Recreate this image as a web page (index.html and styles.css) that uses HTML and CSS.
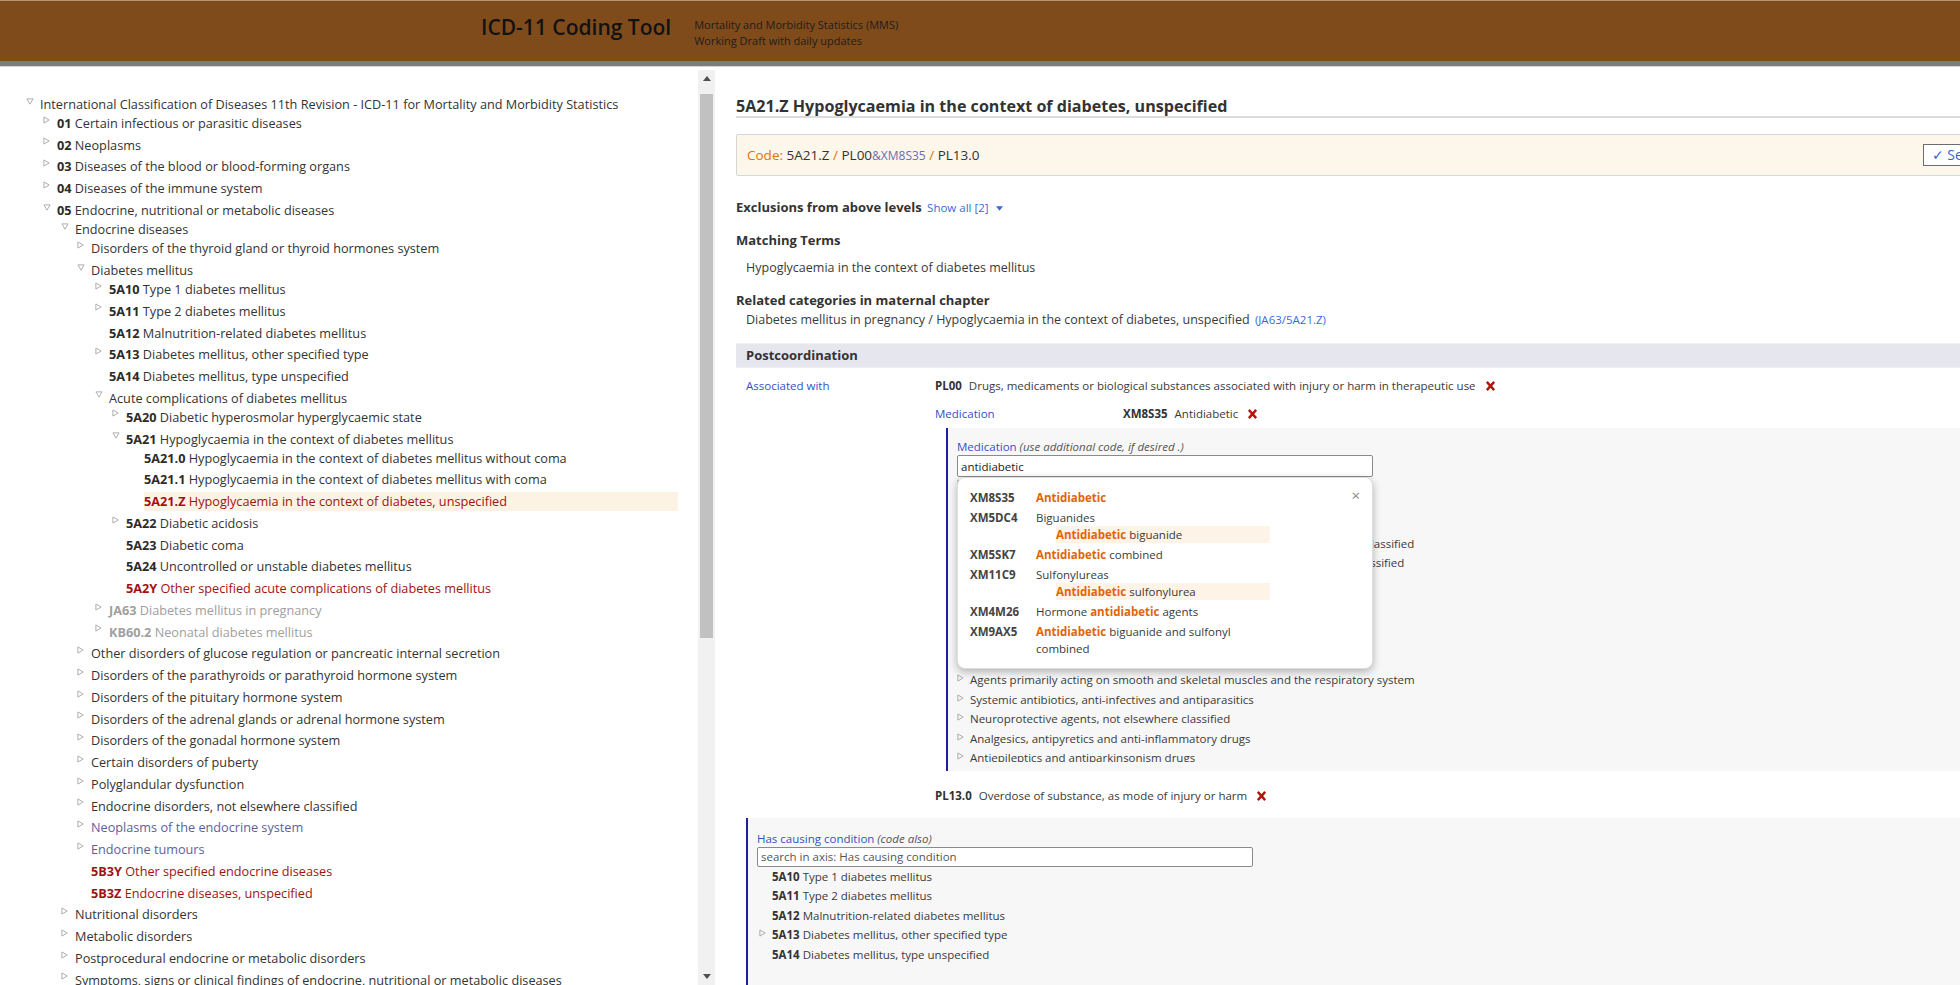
FILE: index.html
```html
<!DOCTYPE html>
<html lang="en">
<head>
<meta charset="utf-8">
<title>ICD-11 Coding Tool</title>
<link rel="stylesheet" href="styles.css">
</head>
<body>
<header class="topbar">
  <div class="brand">
    <h1 class="brand-title">ICD-11 Coding Tool</h1>
    <div class="brand-sub">
      <div>Mortality and Morbidity Statistics (MMS)</div>
      <div>Working Draft with daily updates</div>
    </div>
  </div>
</header>

<div class="main">
  <aside class="treepane">
    <div class="tree">
      <div class="row fc l0"><span class="tg"><svg class="tri-d" viewBox="0 0 9 8"><path d="M1 1H8L4.5 7Z"/></svg></span><span class="lbl">International Classification of Diseases 11th Revision - ICD-11 for Mortality and Morbidity Statistics</span></div>
      <div class="row fc l1"><span class="tg"><svg class="tri-r" viewBox="0 0 8 9"><path d="M1 1L7 4.5L1 8Z"/></svg></span><span class="lbl"><b>01</b> Certain infectious or parasitic diseases</span></div>
      <div class="row l1"><span class="tg"><svg class="tri-r" viewBox="0 0 8 9"><path d="M1 1L7 4.5L1 8Z"/></svg></span><span class="lbl"><b>02</b> Neoplasms</span></div>
      <div class="row l1"><span class="tg"><svg class="tri-r" viewBox="0 0 8 9"><path d="M1 1L7 4.5L1 8Z"/></svg></span><span class="lbl"><b>03</b> Diseases of the blood or blood-forming organs</span></div>
      <div class="row l1"><span class="tg"><svg class="tri-r" viewBox="0 0 8 9"><path d="M1 1L7 4.5L1 8Z"/></svg></span><span class="lbl"><b>04</b> Diseases of the immune system</span></div>
      <div class="row l1"><span class="tg"><svg class="tri-d" viewBox="0 0 9 8"><path d="M1 1H8L4.5 7Z"/></svg></span><span class="lbl"><b>05</b> Endocrine, nutritional or metabolic diseases</span></div>
      <div class="row fc l2"><span class="tg"><svg class="tri-d" viewBox="0 0 9 8"><path d="M1 1H8L4.5 7Z"/></svg></span><span class="lbl">Endocrine diseases</span></div>
      <div class="row fc l3"><span class="tg"><svg class="tri-r" viewBox="0 0 8 9"><path d="M1 1L7 4.5L1 8Z"/></svg></span><span class="lbl">Disorders of the thyroid gland or thyroid hormones system</span></div>
      <div class="row l3"><span class="tg"><svg class="tri-d" viewBox="0 0 9 8"><path d="M1 1H8L4.5 7Z"/></svg></span><span class="lbl">Diabetes mellitus</span></div>
      <div class="row fc l4"><span class="tg"><svg class="tri-r" viewBox="0 0 8 9"><path d="M1 1L7 4.5L1 8Z"/></svg></span><span class="lbl"><b>5A10</b> Type 1 diabetes mellitus</span></div>
      <div class="row l4"><span class="tg"><svg class="tri-r" viewBox="0 0 8 9"><path d="M1 1L7 4.5L1 8Z"/></svg></span><span class="lbl"><b>5A11</b> Type 2 diabetes mellitus</span></div>
      <div class="row l4"><span class="tg"></span><span class="lbl"><b>5A12</b> Malnutrition-related diabetes mellitus</span></div>
      <div class="row l4"><span class="tg"><svg class="tri-r" viewBox="0 0 8 9"><path d="M1 1L7 4.5L1 8Z"/></svg></span><span class="lbl"><b>5A13</b> Diabetes mellitus, other specified type</span></div>
      <div class="row l4"><span class="tg"></span><span class="lbl"><b>5A14</b> Diabetes mellitus, type unspecified</span></div>
      <div class="row l4"><span class="tg"><svg class="tri-d" viewBox="0 0 9 8"><path d="M1 1H8L4.5 7Z"/></svg></span><span class="lbl">Acute complications of diabetes mellitus</span></div>
      <div class="row fc l5"><span class="tg"><svg class="tri-r" viewBox="0 0 8 9"><path d="M1 1L7 4.5L1 8Z"/></svg></span><span class="lbl"><b>5A20</b> Diabetic hyperosmolar hyperglycaemic state</span></div>
      <div class="row l5"><span class="tg"><svg class="tri-d" viewBox="0 0 9 8"><path d="M1 1H8L4.5 7Z"/></svg></span><span class="lbl"><b>5A21</b> Hypoglycaemia in the context of diabetes mellitus</span></div>
      <div class="row fc l6"><span class="tg"></span><span class="lbl"><b>5A21.0</b> Hypoglycaemia in the context of diabetes mellitus without coma</span></div>
      <div class="row l6"><span class="tg"></span><span class="lbl"><b>5A21.1</b> Hypoglycaemia in the context of diabetes mellitus with coma</span></div>
      <div class="row l6"><span class="tg"></span><span class="lbl sel"><b>5A21.Z</b> Hypoglycaemia in the context of diabetes, unspecified</span></div>
      <div class="row l5"><span class="tg"><svg class="tri-r" viewBox="0 0 8 9"><path d="M1 1L7 4.5L1 8Z"/></svg></span><span class="lbl"><b>5A22</b> Diabetic acidosis</span></div>
      <div class="row l5"><span class="tg"></span><span class="lbl"><b>5A23</b> Diabetic coma</span></div>
      <div class="row l5"><span class="tg"></span><span class="lbl"><b>5A24</b> Uncontrolled or unstable diabetes mellitus</span></div>
      <div class="row l5"><span class="tg"></span><span class="lbl red"><b>5A2Y</b> Other specified acute complications of diabetes mellitus</span></div>
      <div class="row l4"><span class="tg"><svg class="tri-r" viewBox="0 0 8 9"><path d="M1 1L7 4.5L1 8Z"/></svg></span><span class="lbl dim"><b>JA63</b> Diabetes mellitus in pregnancy</span></div>
      <div class="row l4"><span class="tg"><svg class="tri-r" viewBox="0 0 8 9"><path d="M1 1L7 4.5L1 8Z"/></svg></span><span class="lbl dim"><b>KB60.2</b> Neonatal diabetes mellitus</span></div>
      <div class="row l3"><span class="tg"><svg class="tri-r" viewBox="0 0 8 9"><path d="M1 1L7 4.5L1 8Z"/></svg></span><span class="lbl">Other disorders of glucose regulation or pancreatic internal secretion</span></div>
      <div class="row l3"><span class="tg"><svg class="tri-r" viewBox="0 0 8 9"><path d="M1 1L7 4.5L1 8Z"/></svg></span><span class="lbl">Disorders of the parathyroids or parathyroid hormone system</span></div>
      <div class="row l3"><span class="tg"><svg class="tri-r" viewBox="0 0 8 9"><path d="M1 1L7 4.5L1 8Z"/></svg></span><span class="lbl">Disorders of the pituitary hormone system</span></div>
      <div class="row l3"><span class="tg"><svg class="tri-r" viewBox="0 0 8 9"><path d="M1 1L7 4.5L1 8Z"/></svg></span><span class="lbl">Disorders of the adrenal glands or adrenal hormone system</span></div>
      <div class="row l3"><span class="tg"><svg class="tri-r" viewBox="0 0 8 9"><path d="M1 1L7 4.5L1 8Z"/></svg></span><span class="lbl">Disorders of the gonadal hormone system</span></div>
      <div class="row l3"><span class="tg"><svg class="tri-r" viewBox="0 0 8 9"><path d="M1 1L7 4.5L1 8Z"/></svg></span><span class="lbl">Certain disorders of puberty</span></div>
      <div class="row l3"><span class="tg"><svg class="tri-r" viewBox="0 0 8 9"><path d="M1 1L7 4.5L1 8Z"/></svg></span><span class="lbl">Polyglandular dysfunction</span></div>
      <div class="row l3"><span class="tg"><svg class="tri-r" viewBox="0 0 8 9"><path d="M1 1L7 4.5L1 8Z"/></svg></span><span class="lbl">Endocrine disorders, not elsewhere classified</span></div>
      <div class="row l3"><span class="tg"><svg class="tri-r" viewBox="0 0 8 9"><path d="M1 1L7 4.5L1 8Z"/></svg></span><span class="lbl slate">Neoplasms of the endocrine system</span></div>
      <div class="row l3"><span class="tg"><svg class="tri-r" viewBox="0 0 8 9"><path d="M1 1L7 4.5L1 8Z"/></svg></span><span class="lbl slate">Endocrine tumours</span></div>
      <div class="row l3"><span class="tg"></span><span class="lbl red"><b>5B3Y</b> Other specified endocrine diseases</span></div>
      <div class="row l3"><span class="tg"></span><span class="lbl red"><b>5B3Z</b> Endocrine diseases, unspecified</span></div>
      <div class="row l2"><span class="tg"><svg class="tri-r" viewBox="0 0 8 9"><path d="M1 1L7 4.5L1 8Z"/></svg></span><span class="lbl">Nutritional disorders</span></div>
      <div class="row l2"><span class="tg"><svg class="tri-r" viewBox="0 0 8 9"><path d="M1 1L7 4.5L1 8Z"/></svg></span><span class="lbl">Metabolic disorders</span></div>
      <div class="row l2"><span class="tg"><svg class="tri-r" viewBox="0 0 8 9"><path d="M1 1L7 4.5L1 8Z"/></svg></span><span class="lbl">Postprocedural endocrine or metabolic disorders</span></div>
      <div class="row l2"><span class="tg"><svg class="tri-r" viewBox="0 0 8 9"><path d="M1 1L7 4.5L1 8Z"/></svg></span><span class="lbl">Symptoms, signs or clinical findings of endocrine, nutritional or metabolic diseases</span></div>
    </div>
    <div class="vscroll">
      <div class="sb-btn"><svg viewBox="0 0 8 5"><path d="M0 5L4 0L8 5Z"/></svg></div>
      <div class="sb-track"><div class="sb-thumb"></div></div>
      <div class="sb-btn"><svg viewBox="0 0 8 5"><path d="M0 0H8L4 5Z"/></svg></div>
    </div>
  </aside>

  <main class="detail">
    <div class="detail-inner">
      <h2 class="entity-title">5A21.Z Hypoglycaemia in the context of diabetes, unspecified</h2>

      <div class="codebox">
        <div class="codeline"><span class="c-lbl">Code:</span> 5A21.Z <span class="c-sep">/</span> PL00<span class="c-amp">&amp;XM8S35</span> <span class="c-sep">/</span> PL13.0</div>
        <button class="select-btn">&#10003; Select</button>
      </div>

      <div class="sec-h excl">Exclusions from above levels <a class="showall">Show all [2] <svg class="caret" viewBox="0 0 8 5"><path d="M0 0H8L4 5Z"/></svg></a></div>

      <div class="sec-h match">Matching Terms</div>
      <div class="sec-txt match-txt">Hypoglycaemia in the context of diabetes mellitus</div>

      <div class="sec-h related">Related categories in maternal chapter</div>
      <div class="sec-txt related-txt">Diabetes mellitus in pregnancy / Hypoglycaemia in the context of diabetes, unspecified <a class="codelink">(JA63/5A21.Z)</a></div>

      <div class="pc-bar">Postcoordination</div>

      <div class="pc-row">
        <div class="pc-axis">Associated with</div>
        <div class="pc-vals">
          <div class="pc-item"><b>PL00</b> Drugs, medicaments or biological substances associated with injury or harm in therapeutic use <svg class="xdel" viewBox="0 0 12 12"><path d="M2 1.5L10 10.5M10 1.5L2 10.5"/></svg></div>

          <div class="pc-sub">
            <div class="pc-sub-axis">Medication</div>
            <div class="pc-item"><b>XM8S35</b> Antidiabetic <svg class="xdel" viewBox="0 0 12 12"><path d="M2 1.5L10 10.5M10 1.5L2 10.5"/></svg></div>
          </div>

          <div class="axis-panel med-panel">
            <div class="axis-lbl">Medication <i>(use additional code, if desired .)</i></div>
            <div class="searchbox">
              <input class="axis-input" type="text" value="antidiabetic">
              <div class="dropdown">
                <span class="dd-close">&#215;</span>
                <div class="dd-item"><span class="dd-code">XM8S35</span><span class="dd-title"><em>Antidiabetic</em></span></div>
                <div class="dd-item"><span class="dd-code">XM5DC4</span><span class="dd-title">Biguanides<span class="dd-syn"><em>Antidiabetic</em> biguanide</span></span></div>
                <div class="dd-item"><span class="dd-code">XM5SK7</span><span class="dd-title"><em>Antidiabetic</em> combined</span></div>
                <div class="dd-item"><span class="dd-code">XM11C9</span><span class="dd-title">Sulfonylureas<span class="dd-syn"><em>Antidiabetic</em> sulfonylurea</span></span></div>
                <div class="dd-item"><span class="dd-code">XM4M26</span><span class="dd-title">Hormone <em>antidiabetic</em> agents</span></div>
                <div class="dd-item"><span class="dd-code">XM9AX5</span><span class="dd-title"><em>Antidiabetic</em> biguanide and sulfonyl combined</span></div>
              </div>
            </div>
            <div class="axis-list med-list">
              <div class="al-row"><span class="tg"><svg class="tri-r" viewBox="0 0 8 9"><path d="M1 1L7 4.5L1 8Z"/></svg></span>Agents primarily affecting blood constituents</div>
              <div class="al-row"><span class="tg"><svg class="tri-r" viewBox="0 0 8 9"><path d="M1 1L7 4.5L1 8Z"/></svg></span>Agents primarily affecting gastrointestinal system</div>
              <div class="al-row"><span class="tg"><svg class="tri-r" viewBox="0 0 8 9"><path d="M1 1L7 4.5L1 8Z"/></svg></span>Agents primarily affecting the cardiovascular system</div>
              <div class="al-row"><span class="tg"><svg class="tri-r" viewBox="0 0 8 9"><path d="M1 1L7 4.5L1 8Z"/></svg></span>Hormones and their synthetic substitutes and antagonists, not elsewhere classified</div>
              <div class="al-row"><span class="tg"><svg class="tri-r" viewBox="0 0 8 9"><path d="M1 1L7 4.5L1 8Z"/></svg></span>Drugs primarily affecting the autonomic nervous system, not elsewhere classified</div>
              <div class="al-row"><span class="tg"><svg class="tri-r" viewBox="0 0 8 9"><path d="M1 1L7 4.5L1 8Z"/></svg></span>Anaesthetics and therapeutic gases</div>
              <div class="al-row"><span class="tg"><svg class="tri-r" viewBox="0 0 8 9"><path d="M1 1L7 4.5L1 8Z"/></svg></span>Narcotics and psychodysleptics</div>
              <div class="al-row"><span class="tg"><svg class="tri-r" viewBox="0 0 8 9"><path d="M1 1L7 4.5L1 8Z"/></svg></span>Sedative hypnotics and anxiolytics</div>
              <div class="al-row"><span class="tg"><svg class="tri-r" viewBox="0 0 8 9"><path d="M1 1L7 4.5L1 8Z"/></svg></span>Psychotropic agents, not elsewhere classified</div>
              <div class="al-row"><span class="tg"><svg class="tri-r" viewBox="0 0 8 9"><path d="M1 1L7 4.5L1 8Z"/></svg></span>Vaccines and biological substances</div>
              <div class="al-row"><span class="tg"><svg class="tri-r" viewBox="0 0 8 9"><path d="M1 1L7 4.5L1 8Z"/></svg></span>Agents primarily acting on smooth and skeletal muscles and the respiratory system</div>
              <div class="al-row"><span class="tg"><svg class="tri-r" viewBox="0 0 8 9"><path d="M1 1L7 4.5L1 8Z"/></svg></span>Systemic antibiotics, anti-infectives and antiparasitics</div>
              <div class="al-row"><span class="tg"><svg class="tri-r" viewBox="0 0 8 9"><path d="M1 1L7 4.5L1 8Z"/></svg></span>Neuroprotective agents, not elsewhere classified</div>
              <div class="al-row"><span class="tg"><svg class="tri-r" viewBox="0 0 8 9"><path d="M1 1L7 4.5L1 8Z"/></svg></span>Analgesics, antipyretics and anti-inflammatory drugs</div>
              <div class="al-row"><span class="tg"><svg class="tri-r" viewBox="0 0 8 9"><path d="M1 1L7 4.5L1 8Z"/></svg></span>Antiepileptics and antiparkinsonism drugs</div>
              <div class="al-row"><span class="tg"><svg class="tri-r" viewBox="0 0 8 9"><path d="M1 1L7 4.5L1 8Z"/></svg></span>Diuretics and other drugs</div>
            </div>
          </div>

          <div class="pc-item pl13"><b>PL13.0</b> Overdose of substance, as mode of injury or harm <svg class="xdel" viewBox="0 0 12 12"><path d="M2 1.5L10 10.5M10 1.5L2 10.5"/></svg></div>
        </div>
      </div>

      <div class="axis-panel cause-panel">
        <div class="axis-lbl">Has causing condition <i>(code also)</i></div>
        <input class="axis-input cause-input" type="text" placeholder="search in axis: Has causing condition">
        <div class="axis-list cause-list">
          <div class="al-row"><span class="tg"></span><b>5A10</b>&nbsp;Type 1 diabetes mellitus</div>
          <div class="al-row"><span class="tg"></span><b>5A11</b>&nbsp;Type 2 diabetes mellitus</div>
          <div class="al-row"><span class="tg"></span><b>5A12</b>&nbsp;Malnutrition-related diabetes mellitus</div>
          <div class="al-row"><span class="tg"><svg class="tri-r" viewBox="0 0 8 9"><path d="M1 1L7 4.5L1 8Z"/></svg></span><b>5A13</b>&nbsp;Diabetes mellitus, other specified type</div>
          <div class="al-row"><span class="tg"></span><b>5A14</b>&nbsp;Diabetes mellitus, type unspecified</div>
        </div>
      </div>
    </div>
  </main>
</div>
</body>
</html>
```

FILE: styles.css
```css
* { box-sizing: border-box; }

html, body {
  margin: 0;
  height: 100%;
  overflow: hidden;
}

body {
  font-family: "Open Sans", "Noto Sans", Arial, sans-serif;
  color: #333;
  background: #fff;
}

/* ---------- header ---------- */
.topbar {
  height: 66px;
  background: #804b1b;
  border-top: 1px solid #b39573;
  border-bottom: 5px solid #7c7c7c;
  box-shadow: 0 1px 0 #d4d4d4;
  display: flex;
  align-items: flex-start;
  padding: 11px 0 0 481px;
}

.brand {
  display: flex;
  align-items: flex-start;
  gap: 23px;
}

.brand-title {
  margin: 0;
  font-size: 21px;
  font-weight: 600;
  line-height: 30px;
  color: #121212;
}

.brand-sub {
  margin-top: 5px;
  font-size: 11px;
  line-height: 16px;
  color: #1d1d1d;
}

/* ---------- layout ---------- */
.main {
  display: flex;
  height: calc(100% - 66px);
}

.treepane {
  flex: 0 0 715px;
  display: flex;
  min-height: 0;
}

/* ---------- tree ---------- */
.tree {
  flex: 1;
  min-width: 0;
  overflow: hidden;
  padding: 28.5px 20px 0 0;
  font-size: 12.7px;
  white-space: nowrap;
  color: #333;
}

.row {
  display: flex;
  align-items: center;
  height: 19.1px;
  margin-top: 2.67px;
}

.row.fc { margin-top: 0; }

.tg {
  flex: 0 0 14px;
  align-self: flex-start;
  display: flex;
  padding-top: 2px;
}

.tri-r, .tri-d {
  fill: none;
  stroke: #a4a4a4;
  stroke-width: 1;
}

.tri-r { width: 7px; height: 8px; }
.tri-d { width: 8px; height: 7px; margin-top: 1px; }

.lbl {
  flex: 1;
  line-height: 18.3px;
}

.lbl b { color: #2b2b2b; }

.l0 { padding-left: 26px; }
.l1 { padding-left: 43px; }
.l2 { padding-left: 61px; }
.l3 { padding-left: 77px; }
.l4 { padding-left: 95px; }
.l5 { padding-left: 112px; }
.l6 { padding-left: 130px; }

.lbl.sel {
  background: #fdf3e5;
  color: #a01212;
}

.lbl.sel b, .lbl.red b { color: #a01212; }
.red { color: #a01212; }
.dim, .lbl.dim b { color: #a0a0a0; }
.slate { color: #5e5e9c; }

/* fake scrollbar of the tree pane */
.vscroll {
  flex: 0 0 17px;
  display: flex;
  flex-direction: column;
  background: #f1f1f1;
  margin-top: 4px;
}

.sb-btn {
  height: 17px;
  display: flex;
  align-items: center;
  justify-content: center;
}

.sb-btn svg {
  width: 8px;
  height: 5px;
  fill: #505050;
}

.sb-track {
  flex: 1;
  padding: 7px 2px 0;
}

.sb-thumb {
  height: 544px;
  background: #c1c1c1;
}

/* ---------- detail ---------- */
.detail {
  flex: 1;
  min-width: 0;
  overflow: hidden;
  padding: 30px 0 0 21px;
}

.detail-inner {
  width: 1275px;
}

.entity-title {
  margin: 0;
  font-size: 16.1px;
  font-weight: 700;
  line-height: 20px;
  color: #333;
  border-bottom: 2px solid #dcdcdc;
}

.codebox {
  margin-top: 16px;
  height: 42px;
  background: #fdf6ea;
  border: 1px solid #d6d6d6;
  border-radius: 2px;
  display: flex;
  align-items: center;
  justify-content: space-between;
  padding: 0 15px 0 10px;
}

.codeline {
  font-size: 13.5px;
  color: #333;
}

.c-lbl, .c-sep { color: #e0720a; }

.c-amp {
  color: #6e6ead;
  font-size: 12px;
}

.select-btn {
  font-family: "Open Sans", Arial, sans-serif;
  font-size: 14px;
  color: #3a5fd6;
  background: #fff;
  border: 1px solid #6d6d6d;
  height: 22px;
  padding: 0 8px;
  line-height: 18px;
}

.sec-h {
  font-size: 13px;
  font-weight: 700;
  line-height: 18px;
  color: #333;
}

.excl { margin-top: 22px; }
.match { margin-top: 14px; }
.related { margin-top: 15.5px; }

.showall {
  font-size: 11.5px;
  font-weight: 400;
  color: #3a6ad8;
  margin-left: 2px;
}

.caret {
  width: 7px;
  height: 5px;
  fill: #3a6ad8;
  margin-left: 4px;
  vertical-align: 1px;
}

.sec-txt {
  font-size: 12.5px;
  line-height: 17px;
  padding-left: 10px;
  color: #3a3a3a;
}

.match-txt { margin-top: 9.5px; }
.related-txt { margin-top: 1.5px; }

.codelink {
  font-size: 11.5px;
  color: #3a6ad8;
  margin-left: 2px;
}

.pc-bar {
  margin-top: 15.5px;
  height: 25px;
  background: #e6e6ef;
  border-top: 1px solid #efeff4;
  border-bottom: 1px solid #ececf2;
  padding-left: 10px;
  font-size: 13px;
  font-weight: 700;
  line-height: 23px;
  color: #333;
}

/* postcoordination rows */
.pc-row {
  display: flex;
  margin-top: 9px;
  padding-left: 10px;
  font-size: 11.5px;
}

.pc-axis {
  flex: 0 0 189px;
  line-height: 17px;
  color: #3352c4;
}

.pc-vals {
  flex: 1;
  min-width: 0;
}

.pc-item {
  line-height: 17px;
  color: #3a3a3a;
  white-space: nowrap;
}

.pc-item b {
  color: #333;
  margin-right: 4px;
}

.xdel {
  width: 11px;
  height: 12px;
  margin-left: 6px;
  vertical-align: -2px;
  fill: none;
  stroke: #b1160d;
  stroke-width: 2.6;
}

.pc-sub {
  display: flex;
  margin-top: 11px;
}

.pc-sub-axis {
  flex: 0 0 188px;
  line-height: 17px;
  color: #3352c4;
}

.axis-panel {
  background: #f7f7f7;
  border-left: 2px solid #1f1f9a;
  padding-left: 9px;
  padding-top: 11.5px;
}

.med-panel {
  margin: 5.5px 0 0 11px;
  padding-top: 10.5px;
  padding-bottom: 9px;
}

.axis-lbl {
  line-height: 17px;
  color: #3352c4;
  font-size: 11.5px;
}

.axis-lbl i { color: #555; }

.searchbox {
  position: relative;
  width: 416px;
}

.axis-input {
  display: block;
  width: 416px;
  height: 22px;
  margin: 0;
  padding: 0 3px;
  border: 1px solid #8a8a8a;
  border-radius: 2px;
  background: #fff;
  font-family: "Open Sans", Arial, sans-serif;
  font-size: 11.5px;
  color: #222;
}

.axis-input::placeholder { color: #555; }

.dropdown {
  position: absolute;
  top: 100%;
  left: 0;
  width: 416px;
  z-index: 5;
  background: #fff;
  border: 1px solid #dedede;
  border-radius: 8px;
  box-shadow: 0 3px 8px rgba(0, 0, 0, 0.28);
  padding: 11px 12px 11px;
  font-size: 11.5px;
}

.dd-close {
  position: absolute;
  top: 8px;
  right: 12px;
  font-size: 15px;
  color: #8a8a8a;
  line-height: 18px;
}

.dd-item {
  display: flex;
  line-height: 17px;
  margin-bottom: 3px;
  color: #3a3a3a;
}

.dd-item:last-child { margin-bottom: 0; }

.dd-code {
  flex: 0 0 66px;
  font-weight: 700;
  color: #444;
}

.dd-title {
  width: 234px;
}

.dd-title em {
  font-style: normal;
  font-weight: 700;
  color: #e0650a;
}

.dd-syn {
  display: block;
  margin-left: 20px;
  background: #fdf3e6;
}

.axis-list {
  font-size: 11.5px;
  color: #3a3a3a;
  white-space: nowrap;
}

.med-list {
  height: 287px;
  margin-top: -2px;
  overflow: hidden;
}

.al-row {
  display: flex;
  line-height: 19.5px;
  height: 19.5px;
}

.al-row b { color: #333; }

.al-row .tg {
  flex: 0 0 13px;
  padding-top: 4px;
}

.pl13 { margin-top: 15.5px; }

.cause-panel {
  margin: 14.5px 0 0 10px;
  padding-bottom: 40px;
}

.cause-input {
  width: 496px;
  height: 20px;
}

.cause-list .al-row {
  padding-left: 2px;
}
```
